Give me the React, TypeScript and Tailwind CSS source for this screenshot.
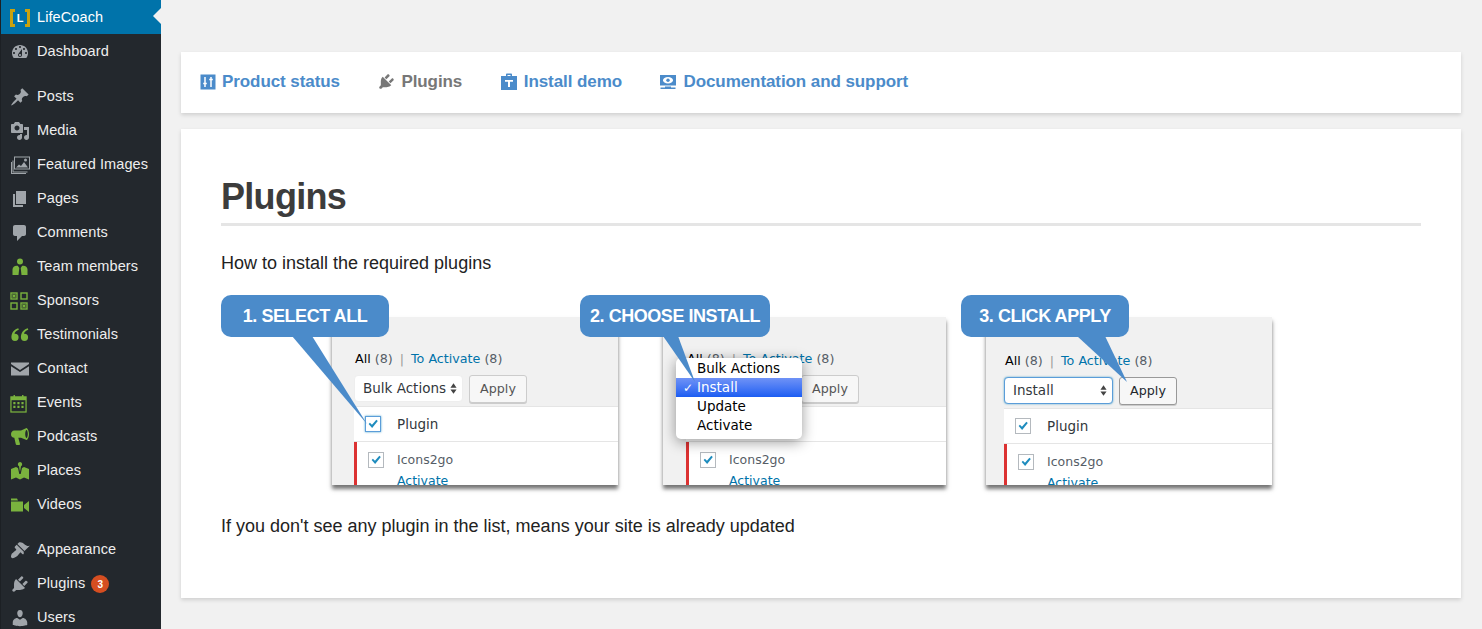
import React from "react";

const P: Record<string, string> = {
  dash: "M3.76 16h12.48c1.1-1.37 1.76-3.11 1.76-5 0-4.42-3.58-8-8-8s-8 3.58-8 8c0 1.89.66 3.63 1.76 5zM10 4c.55 0 1 .45 1 1s-.45 1-1 1-1-.45-1-1 .45-1 1-1zM6 6c.55 0 1 .45 1 1s-.45 1-1 1-1-.45-1-1 .45-1 1-1zm8 0c.55 0 1 .45 1 1s-.45 1-1 1-1-.45-1-1 .45-1 1-1zm-5.37 5.55L12 7v6c0 1.1-.9 2-2 2s-2-.9-2-2c0-.57.24-1.08.63-1.45zM4 10c.55 0 1 .45 1 1s-.45 1-1 1-1-.45-1-1 .45-1 1-1zm12 0c.55 0 1 .45 1 1s-.45 1-1 1-1-.45-1-1 .45-1 1-1zm-5 3c0-.55-.45-1-1-1s-1 .45-1 1 .45 1 1 1 1-.45 1-1z",
  pin: "M10.44 3.02l1.82-1.82 6.36 6.35-1.83 1.82c-1.05-.68-2.48-.57-3.41.36l-.75.75c-.92.93-1.04 2.35-.35 3.41l-1.83 1.82-2.41-2.41-2.8 2.79c-.42.42-3.38 2.71-3.8 2.29s1.86-3.39 2.28-3.81l2.79-2.79L4.1 9.36l1.83-1.82c1.05.69 2.48.57 3.4-.36l.75-.75c.93-.92 1.05-2.35.36-3.41z",
  media: "M13 11V4c0-.55-.45-1-1-1h-1.67L9 1H5L3.67 3H2c-.55 0-1 .45-1 1v7c0 .55.45 1 1 1h10c.55 0 1-.45 1-1zM7 4.5c1.38 0 2.5 1.12 2.5 2.5S8.38 9.5 7 9.5 4.5 8.38 4.5 7 5.62 4.5 7 4.5zM14 6h5v10.5c0 1.38-1.12 2.5-2.5 2.5S14 17.88 14 16.5s1.12-2.5 2.5-2.5c.17 0 .34.02.5.05V9h-3V6zm-4 8.05V13h2v3.5c0 1.38-1.12 2.5-2.5 2.5S7 17.88 7 16.5 8.12 14 9.5 14c.17 0 .34.02.5.05z",
  page: "M6 15V2h10v13H6zm-1 1h8v2H3V5h2v11z",
  comment: "M5 2h9c1.1 0 2 .9 2 2v7c0 1.1-.9 2-2 2h-2l-5 5v-5H5c-1.1 0-2-.9-2-2V4c0-1.1.9-2 2-2z",
  mail: "M1 3.5h18v1.6l-9 5.8-9-5.8zM1 7.2l9 5.8 9-5.8v9.3H1z",
  team: "M10 1.5a3 3 0 1 1 0 6 3 3 0 0 1 0-6zM2.500 18v-5.500C2.500 10.500 4.500 8.800 6.500 8.800h1.300l1.500 2.200-.8 7zM17.500 18v-5.500c0-2-2-3.700-4-3.700h-1.300L10.700 11l.8 7z",
  quote: "M5 8.700a3.600 3.600 0 1 1-3.600 3.600C1.400 8 4 4.300 8.300 3.300l.5 1.500C6.300 5.800 4.800 7 4.500 8.800c.2-.1.3-.1.5-.1zM14.500 8.700a3.600 3.600 0 1 1-3.600 3.600c0-4.300 2.600-8 6.900-9l.5 1.500c-2.500 1-4 2.200-4.300 4 .2-.1.3-.1.5-.1z",
  horn: "M11 3.500L16.500 1c.4 0 2.500 2 2.500 6s-2 6-2.500 6L11 10.800H8.300l1.700 6.300c.1.500-.3.900-.8.900H6.800c-.5 0-.9-.3-1-.8L4.300 10.800C2.300 10.800 1 9.300 1 7.300s1.300-3.800 3.300-3.800zM16.500 3c-.6 0-1.300 1.800-1.300 4s.7 4 1.300 4 1.300-1.800 1.300-4-.7-4-1.300-4z",
  map: "M10 1a2.300 2.300 0 0 1 1 4.300L10 11 9 5.300A2.300 2.300 0 0 1 10 1zM1 8l5-2 2 1 1.300 6h1.400L12 7l2-1 5 2v10.500l-5-2-4 2-4-2-5 2z",
  video: "M1 3.500h6l1 2H1zM1 6.500h12v10H1zM14 10l5-4v11l-5-4z",
  brush: "M14.48 11.06L7.41 3.99l1.5-1.5c.5-.56 2.3-.47 3.51.32 1.21.8 1.43 1.28 2.91 2.1 1.18.64 2.45 1.26 4.45.85zm-.71.71L6.7 4.7 4.93 6.47c-.39.39-.39 1.02 0 1.41l1.06 1.06c.39.39.39 1.03 0 1.42-.6.6-1.43 1.11-2.21 1.69-.35.26-.7.53-1.01.84C1.43 13.23.91 15.82 1 16.72c.15.93.79 1.47 1.78 1.41.7 0 3.22-.73 4.52-2.02.31-.31.58-.65.84-1 .58-.78 1.09-1.61 1.69-2.21.39-.39 1.03-.39 1.42 0l1.06 1.06c.39.39 1.02.39 1.41 0z",
  plug: "M13.11 4.36L9.87 7.6 8 5.73l3.24-3.24c.35-.34 1.05-.2 1.56.32.52.51.66 1.21.31 1.55zm-8 1.77l.91-1.12 9.01 9.01-1.19.84c-.71.71-2.63 1.16-3.82 1.16H6.14L4.9 17.26c-.59.59-1.54.59-2.12 0-.59-.58-.59-1.53 0-2.12l1.24-1.24v-3.88c0-1.13.4-3.19 1.09-3.89zm7.26 3.97l3.24-3.24c.34-.35 1.04-.21 1.55.31.52.51.66 1.21.31 1.55l-3.24 3.25z",
  user: "M10 9.25c-2.27 0-2.73-3.44-2.73-3.44C7 4.02 7.82 2 9.97 2c2.16 0 2.98 2.02 2.71 3.81 0 0-.41 3.44-2.68 3.44zm0 2.57L12.72 10c2.39 0 4.52 2.33 4.52 4.53v2.49s-3.65 1.13-7.24 1.13c-3.65 0-7.24-1.13-7.24-1.13v-2.49c0-2.25 1.94-4.48 4.47-4.48z",
};

function Glyph({ d, className }: { d: string; className: string }) {
  return (
    <svg viewBox="0 0 20 20" className={className} fill="currentColor" aria-hidden="true">
      <path d={d} />
    </svg>
  );
}

function FeaturedIcon() {
  return (
    <svg viewBox="0 0 20 20" className="w-[20px] h-[20px] text-[#a0a5aa]" aria-hidden="true">
      <path d="M1 7h1v11h14v1H1zM2.500 5.500h1v11h14v1h-15z" fill="currentColor" />
      <rect x="4.500" y="2" width="15" height="12" fill="none" stroke="currentColor" strokeWidth="1" />
      <path d="M6 12.500l3-3 2 1.500 3-4 4 5.500z" fill="currentColor" />
      <circle cx="15.500" cy="5" r="1.500" fill="currentColor" />
    </svg>
  );
}

function SponsorsIcon() {
  return (
    <svg viewBox="0 0 18 18" className="w-[18px] h-[18px] text-[#7ab33e]" fill="none" stroke="currentColor" strokeWidth="1.400" aria-hidden="true">
      <rect x="1" y="1" width="6" height="6" />
      <rect x="11" y="1" width="6" height="6" />
      <rect x="1" y="11" width="6" height="6" />
      <rect x="11" y="11" width="6" height="6" />
      <path d="M2.500 2.500l3 3m0-3l-3 3M12.500 12.500l3 3m0-3l-3 3" />
    </svg>
  );
}

function CalendarIcon() {
  return (
    <svg viewBox="0 0 18 20" className="w-[17px] h-[19px] text-[#7ab33e]" aria-hidden="true">
      <rect x="1" y="3" width="16" height="16" fill="none" stroke="currentColor" strokeWidth="1.300" />
      <rect x="1" y="3" width="16" height="3.500" fill="currentColor" />
      <path d="M4.500 1v3M13.500 1v3" stroke="currentColor" strokeWidth="1.500" />
      <path d="M3.500 8.500h2.300v2.300H3.500zM7.800 8.500h2.300v2.300H7.800zM12.100 8.500h2.300v2.300h-2.300zM3.500 12.500h2.300v2.300H3.500zM7.800 12.500h2.300v2.300H7.800zM12.100 12.500h2.300v2.300h-2.300z" fill="currentColor" />
    </svg>
  );
}

function LogoIcon() {
  return (
    <span className="relative w-[20px] h-[18px] flex items-center justify-center">
      <span className="absolute left-0 top-0 bottom-0 w-[5px] border-l-[3px] border-y-[3px] border-[#c9a20f]" />
      <span className="absolute right-0 top-0 bottom-0 w-[5px] border-r-[3px] border-y-[3px] border-[#c9a20f]" />
      <span className="text-white text-[11px] font-bold leading-none">L</span>
    </span>
  );
}

const gray = "w-[20px] h-[20px] text-[#a0a5aa]";
const green = "w-[20px] h-[20px] text-[#7ab33e]";

type Item = { label: string; icon: React.ReactNode; badge?: string };

const group1: Item[] = [
  { label: "Posts", icon: <Glyph d={P.pin} className={gray} /> },
  { label: "Media", icon: <Glyph d={P.media} className={gray} /> },
  { label: "Featured Images", icon: <FeaturedIcon /> },
  { label: "Pages", icon: <Glyph d={P.page} className={gray} /> },
  { label: "Comments", icon: <Glyph d={P.comment} className={gray} /> },
  { label: "Team members", icon: <Glyph d={P.team} className={green} /> },
  { label: "Sponsors", icon: <SponsorsIcon /> },
  { label: "Testimonials", icon: <Glyph d={P.quote} className={green} /> },
  { label: "Contact", icon: <Glyph d={P.mail} className={gray} /> },
  { label: "Events", icon: <CalendarIcon /> },
  { label: "Podcasts", icon: <Glyph d={P.horn} className={green} /> },
  { label: "Places", icon: <Glyph d={P.map} className={green} /> },
  { label: "Videos", icon: <Glyph d={P.video} className={green} /> },
];

const group2: Item[] = [
  { label: "Appearance", icon: <Glyph d={P.brush} className={gray} /> },
  { label: "Plugins", icon: <Glyph d={P.plug} className={gray} />, badge: "3" },
  { label: "Users", icon: <Glyph d={P.user} className={gray} /> },
];

function MenuRow({ item }: { item: Item }) {
  return (
    <li className="h-[34px] flex items-center pl-[9px] pt-[2px] shrink-0">
      <span className="w-[27px] flex items-center justify-start shrink-0">{item.icon}</span>
      <span className="text-[14.500px] text-[#eeeeee] tracking-[0.1px] whitespace-nowrap">{item.label}</span>
      {item.badge && (
        <span className="ml-[6px] w-[18px] h-[18px] rounded-full bg-[#d54e21] text-white text-[10px] font-bold flex items-center justify-center">
          {item.badge}
        </span>
      )}
    </li>
  );
}

function Sidebar() {
  return (
    <aside className="w-[161px] h-[629px] bg-[#23282d] border-l border-[#1c2024] shrink-0 overflow-hidden font-['Liberation_Sans',sans-serif]">
      <div className="relative h-[34px] bg-[#0073aa] flex items-center pl-[9px] pt-[2px]">
        <span className="w-[27px] shrink-0"><LogoIcon /></span>
        <span className="text-[14.500px] text-white tracking-[0.1px]">LifeCoach</span>
        <span className="absolute right-0 top-[8px] w-0 h-0 border-y-[8px] border-y-transparent border-r-[8px] border-r-[#f1f1f1]" />
      </div>
      <ul>
        <MenuRow item={{ label: "Dashboard", icon: <Glyph d={P.dash} className={gray} /> }} />
      </ul>
      <ul className="mt-[11px]">
        {group1.map((i) => <MenuRow key={i.label} item={i} />)}
      </ul>
      <ul className="mt-[11px]">
        {group2.map((i) => <MenuRow key={i.label} item={i} />)}
      </ul>
    </aside>
  );
}

function NavLink({ icon, label, active, gap }: { icon: React.ReactNode; label: string; active?: boolean; gap: string }) {
  return (
    <span className={`flex items-center ${gap} text-[17px] tracking-[-0.08px] font-bold whitespace-nowrap ${active ? "text-[#777777]" : "text-[#4b8bca]"}`}>
      {icon}
      {label}
    </span>
  );
}

function TopNav() {
  return (
    <nav className="h-[61px] bg-white shadow-[0_2px_4px_rgba(0,0,0,0.14)] flex items-center pl-[19px] pb-[2px] gap-[37.500px]">
      <NavLink
        gap="gap-[6px]"
        label="Product status"
        icon={
          <svg viewBox="0 0 16 16" className="w-[16px] h-[16px]" aria-hidden="true">
            <rect x="0.500" y="0.500" width="15" height="15" fill="#4b8bca" />
            <path d="M5 3v10M11 3v10M3.200 9.500h3.600M9.200 5.500h3.600" stroke="#fff" strokeWidth="1.500" />
          </svg>
        }
      />
      <NavLink gap="gap-[5px]" active label="Plugins" icon={<Glyph d={P.plug} className="w-[19px] h-[19px] text-[#777777]" />} />
      <NavLink
        gap="gap-[6px]"
        label="Install demo"
        icon={
          <svg viewBox="0 0 18 18" className="w-[18px] h-[18px]" aria-hidden="true">
            <path d="M6 3V1.500C6 .8 6.500.5 7 .5h4c.5 0 1 .3 1 1V3h5v14H1V3zM7.500 2v1h3V2z" fill="#4b8bca" fillRule="evenodd" />
            <path d="M5 7h8v1.800h-3V14H8V8.800H5z" fill="#fff" />
          </svg>
        }
      />
      <NavLink
        gap="gap-[6px]"
        label="Documentation and support"
        icon={
          <svg viewBox="0 0 18 16" className="w-[18px] h-[16px]" aria-hidden="true">
            <rect x="1" y="1" width="16" height="10.500" fill="#4b8bca" />
            <ellipse cx="9" cy="6.200" rx="5" ry="3.200" fill="#fff" />
            <circle cx="9" cy="6.200" r="1.700" fill="#4b8bca" />
            <path d="M6 12.500h6v1h4.500v1.500h-15v-1.500H6z" fill="#4b8bca" />
          </svg>
        }
      />
    </nav>
  );
}

const shotFont = "font-['DejaVu_Sans',sans-serif]";

function Check({ focus }: { focus?: boolean }) {
  return (
    <span className={`w-[16px] h-[16px] border flex items-center justify-center bg-white shrink-0 ${focus ? "border-[#5b9dd9] shadow-[0_0_2px_rgba(30,140,190,0.8)]" : "border-[#b4b9be]"}`}>
      <svg viewBox="0 0 16 16" className="w-[14px] h-[14px]" aria-hidden="true">
        <path d="M3 8l1.500-1.500 2.300 2.300L11.800 3 13.500 4.500 7 12.500z" fill="#1e8cbe" />
      </svg>
    </span>
  );
}

function UpDown() {
  return (
    <svg viewBox="0 0 8 12" className="w-[7px] h-[11px] shrink-0" aria-hidden="true">
      <path d="M4 0l3.500 5h-7zM4 12L.5 7h7z" fill="#444" />
    </svg>
  );
}

function Shot({
  width,
  select,
  focused,
  applyDark,
  pl,
  pt,
  headerCheck,
}: {
  width: number;
  select: string;
  focused?: boolean;
  applyDark?: boolean;
  pl: string;
  pt: string;
  headerCheck?: boolean;
}) {
  return (
    <div
      className={`h-[168px] bg-[#f1f1f1] overflow-hidden shadow-[0_4px_4px_rgba(0,0,0,0.55)] text-[13.500px] ${shotFont} ${pl} ${pt}`}
      style={{ width }}
    >
      <div className="h-[19px] pl-[1px] flex items-center gap-[4px] whitespace-nowrap text-[12.700px]">
        <span className="text-black">All</span>
        <span className="text-[#555d66]">(8)</span>
        <span className="text-[#999] mx-[3px]">|</span>
        <span className="text-[#0073aa]">To Activate</span>
        <span className="text-[#555d66]">(8)</span>
      </div>
      <div className="mt-[6px] h-[29px] flex items-center gap-[6px]">
        <span className={`w-[109px] h-[27px] bg-white rounded-[4px] flex items-center justify-between pl-[8px] pr-[5px] text-[#32373c] ${focused ? "border border-[#5b9dd9] shadow-[0_0_2px_rgba(30,140,190,0.8)]" : "border border-[#eeeeee]"}`}>
          {select}
          <UpDown />
        </span>
        <span className={`w-[58px] h-[28px] rounded-[3px] border bg-[#f7f7f7] flex items-center justify-center text-[12.700px] shadow-[0_1px_0_#ccc] ${applyDark ? "border-[#999] text-[#23282d]" : "border-[#cccccc] text-[#555555]"}`}>
          Apply
        </span>
      </div>
      <div className="mt-[3px] bg-white">
        <div className="h-[36px] border-t border-[#e5e5e5] border-b flex items-center pl-[11px] gap-[16px] text-[#32373c]">
          <Check focus={headerCheck} />
          Plugin
        </div>
        <div className="border-l-[3px] border-[#dc3232] pl-[11px] flex gap-[13px] h-[60px] pt-[10px]">
          <Check />
          <div className="-mt-[3px] text-[12.500px] leading-[21px]">
            <div className="text-[#555d66]">Icons2go</div>
            <div className="text-[#0073aa]">Activate</div>
          </div>
        </div>
      </div>
    </div>
  );
}

function Callout({ label, className, tail, viewBox, w, h }: { label: string; className: string; tail: string; viewBox: string; w: string; h: string }) {
  return (
    <div className={`absolute top-0 h-[42px] bg-[#4b8bca] rounded-[10px] flex items-center justify-center text-white text-[18px] font-bold tracking-[-0.45px] whitespace-nowrap ${className}`}>
      {label}
      <svg viewBox={viewBox} className={`absolute top-[41px] left-0 ${w} ${h}`} aria-hidden="true">
        <path d={tail} fill="#4b8bca" />
      </svg>
    </div>
  );
}

function Dropdown() {
  const rows = ["Bulk Actions", "Install", "Update", "Activate"];
  return (
    <div className={`absolute left-[455px] top-[63px] w-[126px] h-[81px] bg-white rounded-[5px] shadow-[0_3px_14px_rgba(0,0,0,0.4)] py-[1px] text-[13.500px] text-black ${shotFont}`}>
      {rows.map((r) => (
        <div
          key={r}
          className={`relative h-[19px] pl-[21px] flex items-center leading-none ${r === "Install" ? "bg-gradient-to-b from-[#6f92f6] to-[#1a5cf2] text-white" : ""}`}
        >
          {r === "Install" && <span className="absolute left-[7px] text-[12px] font-bold">✓</span>}
          {r}
        </div>
      ))}
    </div>
  );
}

function Steps() {
  return (
    <div className="relative h-[190px] mt-[20px] pt-[22px] pl-[111px] flex items-start">
      <Shot width={286} select="Bulk Actions" pl="pl-[22px]" pt="pt-[32px]" headerCheck />
      <div className="ml-[45px]">
        <Shot width={283} select="Bulk Actions" pl="pl-[23px]" pt="pt-[32px]" />
      </div>
      <div className="ml-[40px]">
        <Shot width={286} select="Install" pl="pl-[18px]" pt="pt-[34px]" focused applyDark />
      </div>
      <Dropdown />
      <Callout label="1. SELECT ALL" className="left-0 w-[168px]" tail="M71 0h20l55 88z" viewBox="0 0 150 90" w="w-[150px]" h="h-[90px]" />
      <Callout label="2. CHOOSE INSTALL" className="left-[359px] w-[190px]" tail="M83 0h15l17 46z" viewBox="0 0 120 50" w="w-[120px]" h="h-[50px]" />
      <Callout label="3. CLICK APPLY" className="left-[740px] w-[168px]" tail="M116 0h28l22 46z" viewBox="0 0 170 50" w="w-[170px]" h="h-[50px]" />
    </div>
  );
}

export default function App() {
  return (
    <div className="w-[1482px] h-[629px] flex overflow-hidden bg-[#f1f1f1] font-['Liberation_Sans',sans-serif]">
      <Sidebar />
      <main className="flex-1 pl-[20px] pr-[21px] pt-[52px]">
        <TopNav />
        <section className="mt-[16px] h-[469px] bg-white shadow-[0_2px_4px_rgba(0,0,0,0.14)] px-[40px] pt-[46px]">
          <h1 className="text-[36px] leading-[44px] font-bold text-[#3c3c3c] pb-[4px] border-b-[3px] border-[#e5e5e5] tracking-[-0.7px]">Plugins</h1>
          <p className="mt-[25px] text-[18px] leading-[24px] text-[#222222]">How to install the required plugins</p>
          <Steps />
          <p className="mt-[29px] text-[18px] leading-[24px] text-[#222222]">If you don't see any plugin in the list, means your site is already updated</p>
        </section>
      </main>
    </div>
  );
}
